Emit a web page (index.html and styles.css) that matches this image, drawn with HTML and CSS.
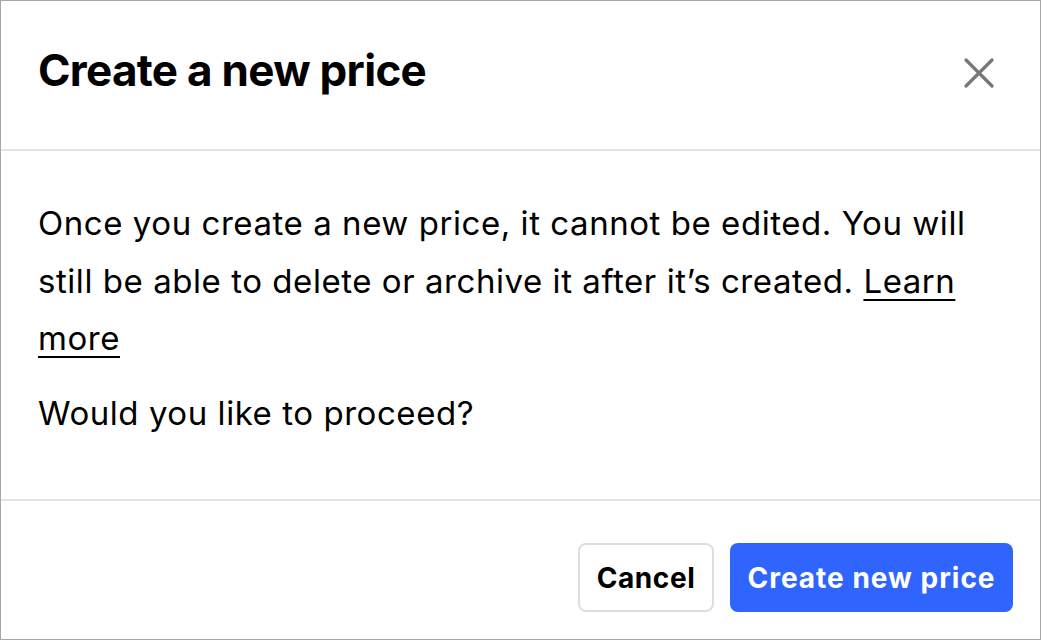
FILE: index.html
```html
<!DOCTYPE html>
<html>
<head>
<meta charset="utf-8">
<link rel="stylesheet" href="styles.css">
</head>
<body>
<div class="dialog">
  <header class="head">
    <h1 class="title">Create a new price</h1>
    <button class="close" aria-label="Close">
      <svg width="32" height="32" viewBox="0 0 32 32"><path d="M3 3 L29 29 M29 3 L3 29" stroke="#777777" stroke-width="3.2" stroke-linecap="round" fill="none"/></svg>
    </button>
  </header>
  <main class="body">
    <p class="text">Once you create a new price, it cannot be edited. You will still be able to delete or archive it after it’s created. <a href="#" class="link">Learn more</a></p>
    <p class="text second">Would you like to proceed?</p>
  </main>
  <footer class="foot">
    <button class="btn cancel">Cancel</button>
    <button class="btn primary">Create new price</button>
  </footer>
</div>
</body>
</html>
```
FILE: styles.css
```css
html, body { margin: 0; padding: 0; background: #fff; }
body { font-family: Inter, "Liberation Sans", sans-serif; color: #000; }
.dialog {
  width: 1041px; height: 640px; box-sizing: border-box;
  border: 1px solid #a6a6a6;
  display: flex; flex-direction: column;
}
.head {
  height: 150px; box-sizing: border-box;
  display: flex; align-items: center; justify-content: space-between;
  padding: 0 45px 10px 37px;
  border-bottom: 2px solid #e4e4e7;
}
.title { margin: 0; font-size: 44px; font-weight: 700; letter-spacing: -0.7px; }
.close { background: none; border: 0; padding: 0; width: 32px; height: 32px; cursor: pointer; margin-top: 6px; }
.close svg { display: block; }
.body { flex: 1; padding: 44px 37px 0; border-bottom: 2px solid #e4e4e7; }
.text { margin: 0; font-size: 33px; line-height: 57.5px; letter-spacing: 0.55px; }
.second { margin-top: 17px; }
.link { color: #000; text-decoration: underline; text-underline-offset: 6px; text-decoration-thickness: 2px; }
.foot {
  height: 138px; box-sizing: border-box;
  display: flex; justify-content: flex-end; align-items: flex-start; gap: 16px;
  padding: 42px 27px 0 0;
}
.btn {
  height: 69px; border-radius: 8px; font-family: inherit; font-size: 28px; font-weight: 700;
  padding: 0; cursor: pointer; letter-spacing: 0.6px;
}
.cancel { background: #fff; border: 2px solid #dedede; color: #000; width: 136px; }
.primary { background: #2f64ff; border: 0; color: #fff; width: 283px; letter-spacing: 1px; }
```
